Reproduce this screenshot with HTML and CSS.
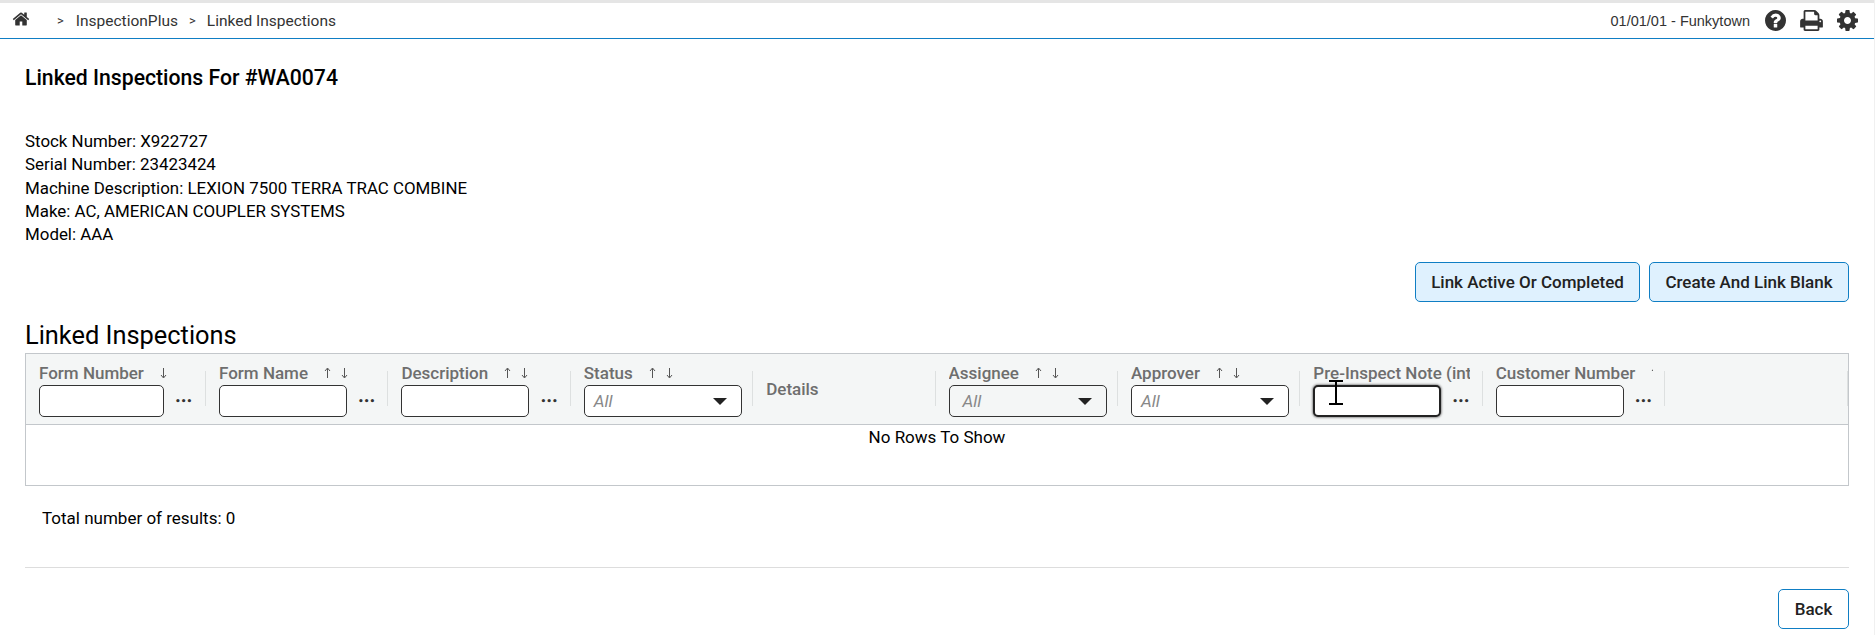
FILE: index.html
```html
<!DOCTYPE html>
<html lang="en">

<head>
    <meta charset="UTF-8">
    <title>Linked Inspections</title>
    <link rel="stylesheet" href="styles.css">
</head>

<body>
    <svg class="defs" width="0" height="0">
        <symbol id="up" viewBox="0 0 7 12"><path d="M3.5 11V1.5M1 4l2.5-3L6 4" fill="none" stroke="currentColor" stroke-width="1"/></symbol>
        <symbol id="down" viewBox="0 0 7 12"><path d="M3.5 1v9.5M1 8l2.5 3L6 8" fill="none" stroke="currentColor" stroke-width="1"/></symbol>
    </svg>

    <header class="topbar">
        <nav class="crumbs">
            <svg class="home" viewBox="0 0 1792 1792"><path d="M1472 992v480q0 26-19 45t-45 19h-384v-384h-256v384h-384q-26 0-45-19t-19-45v-480q0-1 .5-3t.5-3l575-474 575 474q1 2 1 6zm223-69l-62 74q-8 9-21 11h-3q-13 0-21-7l-692-577-692 577q-12 8-24 7-13-2-21-11l-62-74q-8-10-7-23.5t11-21.5l719-599q32-26 76-26t76 26l244 204v-195q0-14 9-23t23-9h192q14 0 23 9t9 23v408l219 182q10 8 11 21.5t-7 23.5z"/></svg>
            <span class="sep sep_first">&gt;</span>
            <a href="#">InspectionPlus</a>
            <span class="sep">&gt;</span>
            <a href="#">Linked Inspections</a>
        </nav>
        <div class="tools">
            <span class="store">01/01/01 - Funkytown</span>
            <svg class="tool" viewBox="128 128 1536 1536"><path d="M1024 1376v-192q0-14-9-23t-23-9h-192q-14 0-23 9t-9 23v192q0 14 9 23t23 9h192q14 0 23-9t9-23zm256-672q0-88-55.5-163t-138.5-116-170-41q-243 0-371 213-15 24 8 42l132 100q7 6 19 6 16 0 25-12 53-68 86-92 34-24 86-24 48 0 85.5 26t37.5 59q0 38-20 61t-68 45q-63 28-115.5 86.5t-52.5 125.5v36q0 14 9 23t23 9h192q14 0 23-9t9-23q0-19 21.5-49.5t54.5-49.5q32-18 49-28.5t46-35 44.5-48 28-60.5 12.5-81zm384 192q0 209-103 385.5t-279.5 279.5-385.5 103-385.5-103-279.5-279.5-103-385.5 103-385.5 279.5-279.5 385.5-103 385.5 103 279.5 279.5 103 385.5z"/></svg>
            <svg class="tool tool_print" viewBox="64 128 1664 1536"><path d="M448 1536h896v-256h-896v256zm0-640h896v-384h-160q-40 0-68-28t-28-68v-160h-640v640zm1152 64q0-26-19-45t-45-19-45 19-19 45 19 45 45 19 45-19 19-45zm128 0v416q0 13-9.5 22.5t-22.5 9.5h-224v160q0 40-28 68t-68 28h-960q-40 0-68-28t-28-68v-160h-224q-13 0-22.5-9.5t-9.5-22.5v-416q0-79 56.5-135.5t135.5-56.5h64v-544q0-40 28-68t68-28h672q40 0 88 20t76 48l152 152q28 28 48 76t20 88v256h64q79 0 135.5 56.5t56.5 135.5z"/></svg>
            <svg class="tool" viewBox="128 128 1536 1536"><path d="M1152 896q0-106-75-181t-181-75-181 75-75 181 75 181 181 75 181-75 75-181zm512-109v222q0 12-8 23t-20 13l-185 28q-19 54-39 91 35 50 107 138 10 12 10 25t-9 23q-27 37-99 108t-94 71q-12 0-26-9l-138-108q-44 23-91 38-16 136-29 186-7 28-36 28h-222q-14 0-24.5-8.5t-11.5-21.5l-28-184q-49-16-90-37l-141 107q-10 9-25 9-14 0-25-11-126-114-165-168-7-10-7-23 0-12 8-23 15-21 51-66.5t54-70.5q-27-50-41-99l-183-27q-13-2-21-12.5t-8-23.5v-222q0-12 8-23t19-13l186-28q14-46 39-92-40-57-107-138-10-12-10-24 0-10 9-23 26-36 98.5-107.5t94.5-71.5q13 0 26 10l138 107q44-23 91-38 16-136 29-186 7-28 36-28h222q14 0 24.5 8.5t11.5 21.5l28 184q49 16 90 37l142-107q9-9 24-9 13 0 25 10 129 119 165 170 7 8 7 22 0 12-8 23-15 21-51 66.5t-54 70.5q26 50 41 98l183 28q13 2 21 12.5t8 23.5z"/></svg>
        </div>
    </header>

    <main class="page">
        <h1 class="title">Linked Inspections For #WA0074</h1>

        <div class="info">
            <p>Stock Number: X922727</p>
            <p>Serial Number: 23423424</p>
            <p>Machine Description: LEXION 7500 TERRA TRAC COMBINE</p>
            <p>Make: AC, AMERICAN COUPLER SYSTEMS</p>
            <p>Model: AAA</p>
        </div>

        <div class="actions">
            <button class="btn btn_link">Link Active Or Completed</button>
            <button class="btn btn_link btn_blank">Create And Link Blank</button>
        </div>

        <h2 class="subtitle">Linked Inspections</h2>

        <div class="grid">
            <div class="grid_head">
                <div class="col col_first">
                    <div class="label">Form Number<svg class="arrow"><use href="#down"/></svg></div>
                    <div class="filter"><input class="box" type="text"><span class="dots">&bull;&bull;&bull;</span></div>
                </div>
                <div class="col">
                    <div class="label">Form Name<svg class="arrow"><use href="#up"/></svg><svg class="arrow arrow_two"><use href="#down"/></svg></div>
                    <div class="filter"><input class="box" type="text"><span class="dots">&bull;&bull;&bull;</span></div>
                </div>
                <div class="col">
                    <div class="label">Description<svg class="arrow"><use href="#up"/></svg><svg class="arrow arrow_two"><use href="#down"/></svg></div>
                    <div class="filter"><input class="box" type="text"><span class="dots">&bull;&bull;&bull;</span></div>
                </div>
                <div class="col">
                    <div class="label">Status<svg class="arrow"><use href="#up"/></svg><svg class="arrow arrow_two"><use href="#down"/></svg></div>
                    <div class="filter"><div class="box select"><i>All</i><span class="caret"></span></div></div>
                </div>
                <div class="col col_plain">
                    <div class="label">Details</div>
                </div>
                <div class="col">
                    <div class="label">Assignee<svg class="arrow"><use href="#up"/></svg><svg class="arrow arrow_two"><use href="#down"/></svg></div>
                    <div class="filter"><div class="box select select_off"><i>All</i><span class="caret"></span></div></div>
                </div>
                <div class="col">
                    <div class="label">Approver<svg class="arrow"><use href="#up"/></svg><svg class="arrow arrow_two"><use href="#down"/></svg></div>
                    <div class="filter"><div class="box select"><i>All</i><span class="caret"></span></div></div>
                </div>
                <div class="col">
                    <div class="label">Pre-Inspect Note (internal)</div>
                    <div class="filter">
                        <input class="box box_focus" type="text"><span class="dots">&bull;&bull;&bull;</span>
                        <svg class="cursor" viewBox="0 0 14 25"><path d="M0 1h14M7 1v23M0 24h14" fill="none" stroke="#000" stroke-width="2"/></svg>
                    </div>
                </div>
                <div class="col">
                    <div class="label">Customer Number<svg class="arrow"><use href="#up"/></svg></div>
                    <div class="filter"><input class="box" type="text"><span class="dots">&bull;&bull;&bull;</span></div>
                </div>
                <div class="col col_end"></div>
            </div>
            <div class="grid_body">No Rows To Show</div>
        </div>

        <p class="total">Total number of results: 0</p>

        <div class="footer">
            <button class="btn btn_back">Back</button>
        </div>
    </main>
</body>

</html>
```

FILE: styles.css
```css
* {
    margin: 0px;
    padding: 0px;
    box-sizing: border-box;
}

html,
body {
    height: 100%;
    overflow: hidden;
}

body {
    background-color: white;
    color: #000;
    font-family: Roboto, "Liberation Sans", sans-serif;
    font-size: 17px;
    border-right: 1px solid #F0F0F0;
}

.defs {
    position: absolute;
}

/*top bar*/
.topbar {
    height: 39px;
    border-top: 3px solid #E5E5E5;
    border-bottom: 1px solid #0F7EC4;
    padding: 0 16px 0 12px;
    display: flex;
    justify-content: space-between;
    align-items: center;
    color: #333;
}

.crumbs,
.tools {
    display: flex;
    align-items: center;
}

.crumbs a {
    color: #333;
    font-size: 15.5px;
    text-decoration: none;
}

.home {
    width: 18px;
    height: 18px;
    fill: #333;
    margin-top: -3px;
}

.sep {
    font-size: 13px;
    margin: 0 11px;
}

.sep_first {
    margin: 0 12px 0 27px;
}

.store {
    font-family: "Liberation Sans", sans-serif;
    font-size: 14.5px;
    margin-right: 15px;
}

.tool {
    width: 21px;
    height: 21px;
    fill: #333;
    margin-left: 14px;
}

.store + .tool {
    margin-left: 0;
}

.tool_print {
    width: 23px;
}

/*main area*/
.page {
    padding: 0 25px 0 25px;
}

.title {
    font-size: 21.2px;
    font-weight: 500;
    line-height: 24px;
    margin-top: 27px;
}

.info {
    font-size: 16.9px;
    margin-top: 40px;
    line-height: 23.25px;
}

.actions {
    display: flex;
    justify-content: flex-end;
    gap: 9px;
    margin-top: 16px;
}

.btn {
    height: 40px;
    border: 1px solid #0F7EC4;
    border-radius: 5px;
    font-family: Roboto, sans-serif;
    font-size: 17px;
    font-weight: 500;
    color: #222;
    background-color: white;
}

.btn_link {
    width: 225px;
    background-color: #DFF1FE;
}

.btn_blank {
    width: 200px;
}

.subtitle {
    font-size: 25.4px;
    font-weight: 400;
    line-height: 30px;
    margin-top: 18px;
}

/*grid*/
.grid {
    border: 1px solid #C3C7CB;
    margin-top: 3px;
}

.grid_head {
    height: 71px;
    display: flex;
    background-color: #F4F6F6;
    border-bottom: 1px solid #C3C7CB;
    padding-top: 17px;
    overflow: hidden;
}

.col {
    width: 182.4px;
    height: 35px;
    padding-left: 13px;
    border-right: 1px solid #DDE0E0;
    flex-shrink: 0;
}

.col_first {
    width: 180px;
}

.col_end {
    width: 182.6px;
}

.col_plain {
    display: flex;
    align-items: center;
}

.label {
    width: 157px;
    height: 18px;
    margin-top: -7px;
    overflow: hidden;
    white-space: nowrap;
    display: flex;
    align-items: center;
    font-weight: 500;
    color: #6E6E6E;
    line-height: 18px;
}

.col_plain .label {
    margin-top: 0;
}

.arrow {
    width: 7px;
    height: 12px;
    margin-left: 16px;
    flex-shrink: 0;
    color: #555;
}

.arrow_two {
    margin-left: 10px;
}

.filter {
    margin-top: 3px;
    display: flex;
    align-items: center;
    position: relative;
}

.box {
    width: 128px;
    height: 32px;
    background-color: white;
    border: 1px solid #333;
    border-radius: 5px;
    outline: none;
    flex-shrink: 0;
}

.col_first .box {
    width: 125px;
}

.box_focus {
    border: 2px solid #222;
    box-shadow: 0 0 2px 1px #999;
}

.dots {
    margin-left: 11px;
    font-size: 9px;
    font-weight: bold;
    color: #333;
    font-family: "DejaVu Sans", sans-serif;
}

.select {
    width: 158px;
    display: flex;
    align-items: center;
    justify-content: space-between;
    padding: 0 14px 0 9px;
    color: #888;
}

.select_off {
    background-color: #F4F6F6;
    padding-left: 13px;
}

.caret {
    border-left: 7px solid transparent;
    border-right: 7px solid transparent;
    border-top: 7px solid #222;
}

.cursor {
    position: absolute;
    left: 16px;
    top: -5px;
    width: 14px;
    height: 25px;
}

.grid_body {
    height: 60px;
    text-align: center;
    line-height: 24px;
}

.total {
    margin: 21px 0 0 17px;
    line-height: 22px;
}

.footer {
    margin-top: 38px;
    border-top: 1px solid #DDD;
    padding-top: 21px;
    display: flex;
    justify-content: flex-end;
}

.btn_back {
    width: 71px;
}
```
